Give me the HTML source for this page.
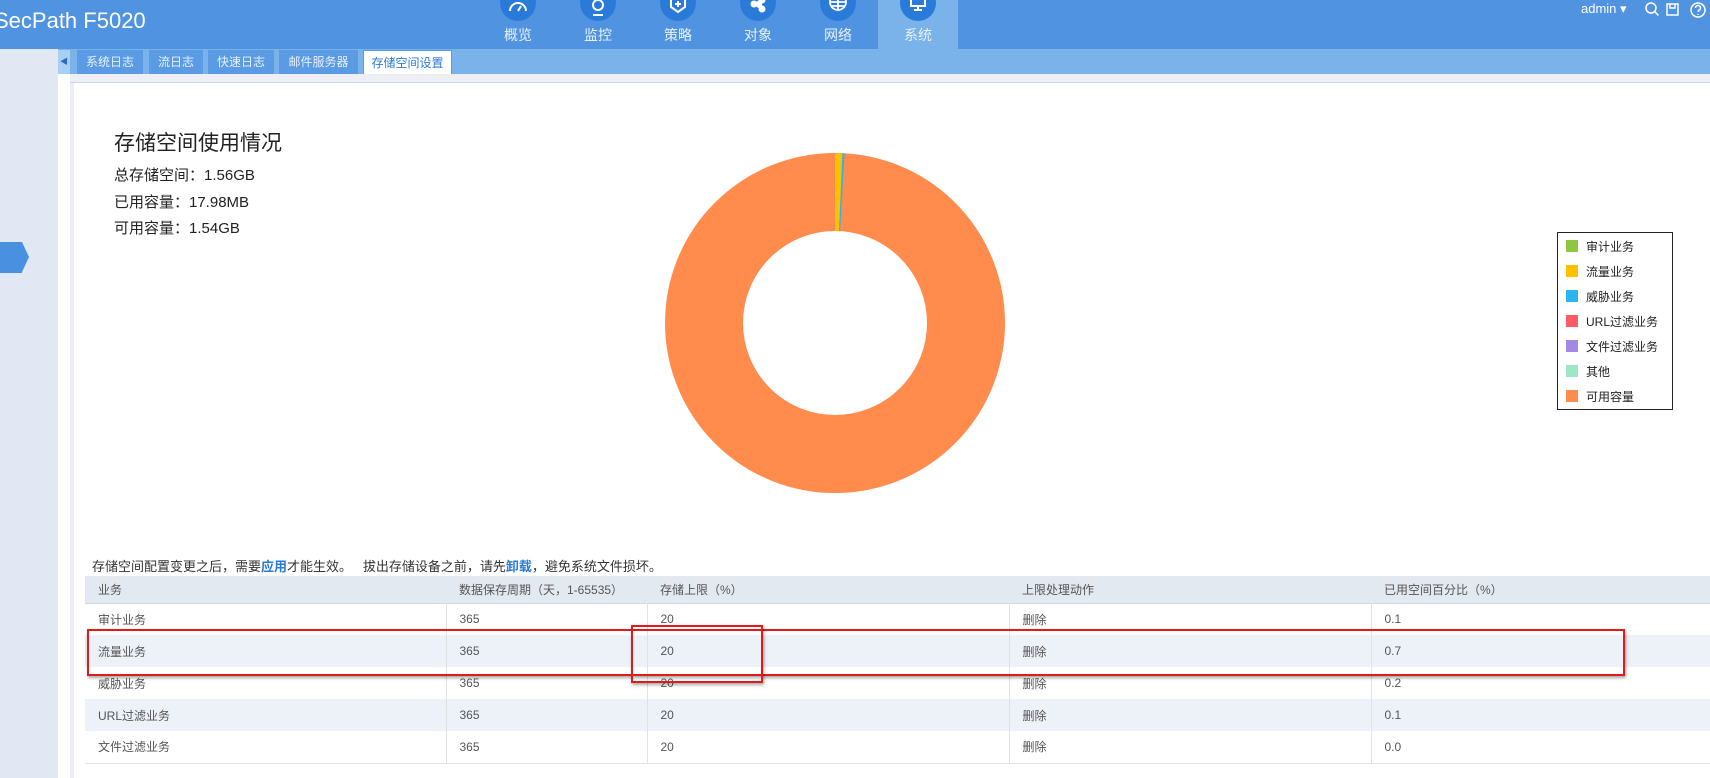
<!DOCTYPE html>
<html><head><meta charset="utf-8"><style>
*{margin:0;padding:0;box-sizing:border-box}
body{width:1710px;height:778px;overflow:hidden;background:#fff;font-family:"Liberation Sans","Noto Sans CJK SC",sans-serif;position:relative;color:#333}
.abs{position:absolute}
.nav{left:0;top:0;width:1710px;height:49px;background:#5093e0}
.navi{position:absolute;top:0;width:80px;height:49px;text-align:center;color:#e8f1fc;font-size:14px}
.navi .c{position:absolute;left:22px;top:-15px;width:36px;height:36px;border-radius:50%;background:#2a7bd9}
.navi .c svg{position:absolute;left:8px;top:14px}
.navi span{position:absolute;left:0;right:0;top:25px}
.sub{left:58px;top:49px;width:1652px;height:25px;background:#7ab3ea}
.tab{position:absolute;top:50px;height:24px;background:#5a9be3;color:#e8f1fc;font-size:12px;line-height:24px;text-align:center}
td,th{font-size:12px;font-weight:normal;text-align:left;padding-left:13px;color:#555}
table{border-collapse:collapse}
.lg i{display:inline-block;width:12px;height:12px;vertical-align:-1px;margin-right:8px}
</style></head><body>
<div class="abs nav"></div>
<div class="abs" style="left:-6px;top:8px;color:#fff;font-size:22px">SecPath F5020</div>
<div class="navi" style="left:478px"><div class="c"><svg width="20" height="20" viewBox="0 0 20 20" fill="none" stroke="#fff" stroke-width="2"><path d="M2 12a8 8 0 0 1 16 0M10 12l3-5"/></svg></div><span>概览</span></div>
<div class="navi" style="left:558px"><div class="c"><svg width="20" height="20" viewBox="0 0 20 20" fill="none" stroke="#fff" stroke-width="2"><circle cx="10" cy="6" r="5"/><path d="M5 16h10"/></svg></div><span>监控</span></div>
<div class="navi" style="left:638px"><div class="c"><svg width="20" height="20" viewBox="0 0 20 20" fill="none" stroke="#fff" stroke-width="2"><path d="M3 0v8l7 5 7-5V0M10 2v6M7 5h6"/></svg></div><span>策略</span></div>
<div class="navi" style="left:718px"><div class="c"><svg width="20" height="20" viewBox="0 0 20 20" fill="#fff" stroke="#fff" stroke-width="2"><circle cx="14" cy="1" r="2.5"/><circle cx="6" cy="5" r="2.5"/><circle cx="14" cy="10" r="2.5"/><path d="M14 1L6 5l8 5"/></svg></div><span>对象</span></div>
<div class="navi" style="left:798px"><div class="c"><svg width="20" height="20" viewBox="0 0 20 20" fill="none" stroke="#fff" stroke-width="1.8"><circle cx="10" cy="3" r="8"/><path d="M2 3h16M10 -5v16M4 -1h12M4 7h12"/></svg></div><span>网络</span></div>
<div class="navi" style="left:878px;background:#7ab3ea"><div class="c"><svg width="20" height="20" viewBox="0 0 20 20" fill="none" stroke="#fff" stroke-width="2"><rect x="3" y="-3" width="14" height="10"/><path d="M10 7v3M6 11h8"/></svg></div><span>系统</span></div>
<div class="abs" style="left:1581px;top:1px;color:#fff;font-size:13px">admin ▾</div>
<svg class="abs" style="left:1644px;top:2px" width="66" height="16" viewBox="0 0 66 16" fill="none" stroke="#fff" stroke-width="1.5"><circle cx="7" cy="6" r="5"/><path d="M10.5 9.5l4 4"/><rect x="23" y="2" width="11" height="11"/><path d="M26 2v4h5V2"/><circle cx="54" cy="8" r="7"/><path d="M51.5 6a2.5 2.5 0 1 1 3 2.4V10M54 12v1"/></svg>
<div class="abs" style="left:0;top:49px;width:58px;height:729px;background:#e1e8f3"></div>
<div class="abs" style="left:0;top:242px;width:22px;height:31px;background:#4a90e0"></div>
<div class="abs" style="left:22px;top:242px;width:0;height:0;border-top:15.5px solid transparent;border-bottom:15.5px solid transparent;border-left:7px solid #4a90e0"></div>
<div class="abs sub"></div>
<div class="abs" style="left:58px;top:50px;width:12px;height:24px;background:#a9cff4;color:#2a6bc0;font-size:8px;line-height:24px;text-align:center">◀</div>
<div class="tab" style="left:77px;width:66px">系统日志</div>
<div class="tab" style="left:149px;width:54px">流日志</div>
<div class="tab" style="left:208px;width:66px">快速日志</div>
<div class="tab" style="left:279px;width:79px">邮件服务器</div>
<div class="tab" style="left:363px;width:89px;background:#fff;color:#2a7bd9;border:1px solid #5a9be3;border-bottom:none">存储空间设置</div>
<div class="abs" style="left:70px;top:74px;width:1640px;height:9px;background:#eeeff4;border-bottom:1px solid #cdd6e6"></div>
<div class="abs" style="left:70px;top:83px;width:4px;height:695px;background:#eeeff4"></div>
<div class="abs" style="left:114px;top:127px;font-size:21px;color:#222">存储空间使用情况</div>
<div class="abs" style="left:114px;top:163px;font-size:15px;color:#222;line-height:26.5px">总存储空间：1.56GB<br>已用容量：17.98MB<br>可用容量：1.54GB</div>
<svg class="abs" style="left:665px;top:153px" width="340" height="340" viewBox="-170 -170 340 340">
<circle r="131" fill="none" stroke="#ff8c4d" stroke-width="78"/>
<circle r="131" fill="none" stroke="#ffc000" stroke-width="78" stroke-dasharray="5.8 900" transform="rotate(-90)"/>
<circle r="131" fill="none" stroke="#29b6f0" stroke-width="78" stroke-dasharray="0 5.8 1.6 900" transform="rotate(-90)"/>
</svg>
<div class="abs lg" style="left:1557px;top:232px;width:116px;height:178px;border:1px solid #222;font-size:12px;color:#222">
<div style="position:absolute;left:8px;top:2px;line-height:25px">
<div><i style="background:#8dc63f"></i>审计业务</div>
<div><i style="background:#ffc000"></i>流量业务</div>
<div><i style="background:#29b6f0"></i>威胁业务</div>
<div><i style="background:#ff5a66"></i>URL过滤业务</div>
<div><i style="background:#a08ae6"></i>文件过滤业务</div>
<div><i style="background:#9ee6c4"></i>其他</div>
<div><i style="background:#ff8c4d"></i>可用容量</div>
</div></div>
<div class="abs" style="left:92px;top:556px;font-size:13px;color:#333">存储空间配置变更之后，需要<b style="color:#2a7bd9">应用</b>才能生效。 &nbsp; 拔出存储设备之前，请先<b style="color:#2a7bd9">卸载</b>，避免系统文件损坏。</div>
<table class="abs" style="left:85px;top:576px;width:1625px">
<tr style="height:27px;background:#e3e9f1;border-bottom:1px solid #cdd6e6"><th style="width:361px">业务</th><th style="width:201px">数据保存周期（天，1-65535）</th><th style="width:362px">存储上限（%）</th><th style="width:362px">上限处理动作</th><th>已用空间百分比（%）</th></tr>
<tr style="height:32px"><td>审计业务</td><td style="border-left:1px solid #e2e2e2">365</td><td style="border-left:1px solid #e2e2e2">20</td><td style="border-left:1px solid #e2e2e2">删除</td><td style="border-left:1px solid #e2e2e2">0.1</td></tr>
<tr style="height:32px;background:#edf1f8"><td>流量业务</td><td style="border-left:1px solid #e2e2e2">365</td><td style="border-left:1px solid #e2e2e2">20</td><td style="border-left:1px solid #e2e2e2">删除</td><td style="border-left:1px solid #e2e2e2">0.7</td></tr>
<tr style="height:32px"><td>威胁业务</td><td style="border-left:1px solid #e2e2e2">365</td><td style="border-left:1px solid #e2e2e2">20</td><td style="border-left:1px solid #e2e2e2">删除</td><td style="border-left:1px solid #e2e2e2">0.2</td></tr>
<tr style="height:32px;background:#edf1f8"><td>URL过滤业务</td><td style="border-left:1px solid #e2e2e2">365</td><td style="border-left:1px solid #e2e2e2">20</td><td style="border-left:1px solid #e2e2e2">删除</td><td style="border-left:1px solid #e2e2e2">0.1</td></tr>
<tr style="height:32px;border-bottom:1px solid #e2e2e2"><td>文件过滤业务</td><td style="border-left:1px solid #e2e2e2">365</td><td style="border-left:1px solid #e2e2e2">20</td><td style="border-left:1px solid #e2e2e2">删除</td><td style="border-left:1px solid #e2e2e2">0.0</td></tr>
</table>
<div class="abs" style="left:87px;top:629px;width:1538px;height:47px;border:2px solid #e21a1a;box-shadow:1px 2px 3px rgba(0,0,0,.35)"></div>
<div class="abs" style="left:631px;top:625px;width:132px;height:58px;border:2px solid #e21a1a;box-shadow:1px 2px 3px rgba(0,0,0,.35)"></div>
</body></html>
